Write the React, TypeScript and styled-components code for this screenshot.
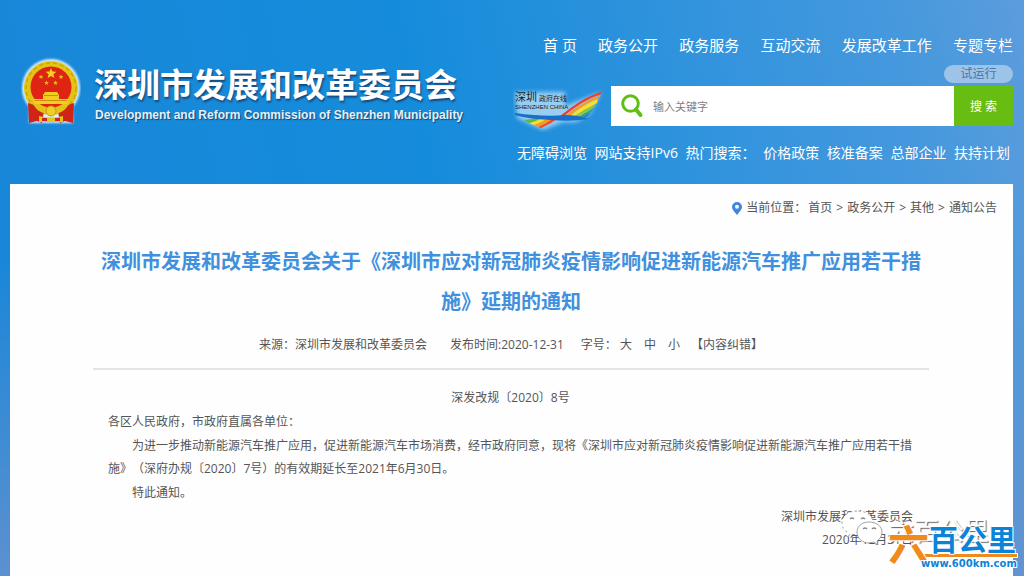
import React from "react";
import styled, { createGlobalStyle } from "styled-components";

const GlobalStyle = createGlobalStyle`
  * { box-sizing: border-box; }
  body {
    margin: 0;
    font-family: "Open Sans", "Noto Sans CJK SC", sans-serif;
    font-size: 12px;
    color: #555;
    text-spacing-trim: space-all;
  }
  a { color: inherit; text-decoration: none; }
  button { font: inherit; color: inherit; border: 0; background: none; padding: 0; cursor: pointer; }
  h1, h2, p { margin: 0; }
`;

const Page = styled.div`
  display: flex;
  flex-direction: column;
  min-height: 100vh;
  position: relative;
  overflow: hidden;
  background:
    linear-gradient(180deg, rgba(104, 146, 206, 0) 45%, rgba(104, 146, 206, 0.85) 100%),
    linear-gradient(78deg, #1a86d8 0%, #158cdb 45%, #3394dd 72%, #4899dd 90%, #5c9cdc 100%);
`;

const Header = styled.header`
  display: flex;
  padding: 35px 11px 21px 21px;
  color: #fff;
`;

const Brand = styled.a`
  flex: 0 0 492px;
  display: flex;
  align-items: flex-start;
  gap: 13px;
  padding-top: 21px;
`;

const BrandText = styled.span`
  display: flex;
  flex-direction: column;
  padding-top: 6px;
`;

const BrandName = styled.span`
  font-family: "Noto Sans CJK SC", sans-serif;
  font-size: 33px;
  font-weight: 700;
  line-height: 42px;
  text-shadow: 1px 2px 2px rgba(20, 50, 90, 0.75);
`;

const BrandEnglish = styled.span`
  padding-left: 1px;
  font-family: "Liberation Sans", sans-serif;
  font-size: 12px;
  font-weight: 700;
  line-height: 22px;
  color: #e4f0fa;
  text-shadow: 1px 1px 1px rgba(20, 50, 90, 0.8);
`;

const Tools = styled.div`
  flex: 1;
  display: flex;
  flex-direction: column;
`;

const MainNav = styled.nav`
  display: flex;
  justify-content: space-between;
  padding-left: 30px;
  font-size: 15px;
  line-height: 20px;
  white-space: nowrap;
`;

const TrialBadge = styled.span`
  align-self: flex-end;
  width: 69px;
  margin: 10px 0 3px;
  border-radius: 9px;
  background: #9dc3e8;
  color: #4577a8;
  line-height: 18px;
  text-align: center;
`;

const SearchRow = styled.form`
  display: flex;
  height: 40px;
  margin-bottom: 17px;
`;

const PortalLink = styled.a`
  flex: 0 0 98px;
`;

const SearchField = styled.label`
  flex: 1;
  display: flex;
  align-items: center;
  gap: 9px;
  padding-left: 10px;
  background: #fff;
`;

const SearchInput = styled.input`
  flex: 1;
  min-width: 0;
  border: 0;
  outline: 0;
  padding: 0;
  background: transparent;
  font: inherit;
  font-size: 11px;
  color: #555;
  &::placeholder { color: #808080; opacity: 1; }
`;

const SearchButton = styled.button`
  flex: 0 0 59px;
  background: #68bd12;
  color: #fff;
`;

const QuickLinks = styled.nav`
  display: flex;
  justify-content: space-between;
  padding: 0 3px 0 4px;
  font-size: 14px;
  line-height: 20px;
  white-space: nowrap;
`;

const Panel = styled.main`
  flex: 1;
  margin: 0 11px 0 10px;
  background: #fefefe;
`;

const Breadcrumb = styled.nav`
  display: flex;
  justify-content: flex-end;
  align-items: center;
  gap: 4px;
  padding: 14px 16px 0 0;
  line-height: 20px;
`;

const BreadcrumbLabel = styled.span`
  margin-right: -2px;
`;

const Article = styled.article`
  padding: 23px 84px 0 83px;
`;

const Title = styled.h1`
  font-family: "Noto Sans CJK SC", sans-serif;
  font-size: 20px;
  font-weight: 700;
  line-height: 40px;
  text-align: center;
  color: #4190dd;
`;

const Meta = styled.div`
  display: flex;
  justify-content: center;
  padding: 14px 0 13px;
  border-bottom: 2px solid #e4e4e4;
  line-height: 20px;
`;

const Published = styled.span`
  margin: 0 17px 0 23px;
`;

const SizePicker = styled.span`
  display: flex;
  gap: 12px;
  margin: 0 11px 0 3px;
`;

const Content = styled.div`
  display: flex;
  flex-direction: column;
  gap: 1px;
  padding: 16px 16px 24px 15px;
  line-height: 23px;
`;

const DocumentNumber = styled.p`
  text-align: center;
`;

const Paragraph = styled.p<{ $indent?: boolean }>`
  text-indent: ${(p) => (p.$indent ? "2em" : "0")};
`;

const Signature = styled.p`
  text-align: right;
`;

const Watermark = styled.div`
  position: absolute;
  right: 35px;
  bottom: 28px;
  display: flex;
  gap: 6px;
  align-items: center;
  color: #fff;
  font-family: "Noto Sans CJK SC", sans-serif;
  font-size: 25px;
  line-height: 36px;
  text-shadow: 1px 1px 1px rgba(70, 70, 70, 0.85);
`;

const SiteMark = styled.div`
  position: absolute;
  right: 4px;
  bottom: 0;
`;

function Emblem() {
  return (
    <svg width="60" height="70" viewBox="0 0 60 70" aria-hidden="true">
      <defs>
        <filter id="glow" x="-20%" y="-20%" width="140%" height="140%">
          <feGaussianBlur stdDeviation="1.3" />
        </filter>
      </defs>
      <g fill="#d9f0ff" filter="url(#glow)">
        <circle cx="30" cy="32" r="29" />
        <path d="M8 46h44v21H8z" />
      </g>
      <circle cx="30" cy="32" r="27" fill="#e3c313" />
      <circle cx="30" cy="32" r="25" fill="none" stroke="#c9a512" strokeWidth="1.400" strokeDasharray="4 3" />
      <circle cx="30" cy="31" r="20.500" fill="#df2413" />
      <path d="M30 12l1.500 3.600 3.900.2-3 2.500 1 3.800-3.400-2.100-3.400 2.100 1-3.800-3-2.500 3.900-.2z" fill="#f4d21c" />
      <g fill="#e9b71b">
        <path d="M20 18.400l.7 1.600 1.700.1-1.300 1.100.4 1.700-1.500-.9-1.500.9.4-1.700-1.300-1.100 1.700-.1z" />
        <path d="M40 18.400l.7 1.600 1.700.1-1.300 1.100.4 1.700-1.500-.9-1.500.9.4-1.700-1.300-1.100 1.700-.1z" />
        <path d="M25.500 24.400l.7 1.600 1.700.1-1.300 1.100.4 1.700-1.500-.9-1.500.9.4-1.700-1.300-1.100 1.700-.1z" />
        <path d="M34.500 24.400l.7 1.600 1.700.1-1.300 1.100.4 1.700-1.500-.9-1.500.9.4-1.700-1.300-1.100 1.700-.1z" />
      </g>
      <path d="M22 39l2-3h12l2 3v4h9v5H13v-5h9z" fill="#f0cf1e" />
      <path d="M23 39.500h14M14 44.500h32" stroke="#d08a14" />
      <path d="M7 47c8 2 10 6 16 8l-2 12-5-2-8 2z" fill="#cf2417" />
      <path d="M53 47c-8 2-10 6-16 8l2 12 5-2 8 2z" fill="#cf2417" />
      <path d="M12 47q9 9 18 4 9 5 18-4-4 11-18 11T12 47z" fill="#e3c313" />
      <circle cx="30" cy="55" r="5" fill="#ecd028" stroke="#c39a12" />
      <path d="M18 60q12 3 24 0v6H18z" fill="#e6c61a" />
      <path d="M21 62h5v3h-5zM34 62h5v3h-5z" fill="#cf2417" />
    </svg>
  );
}

function PortalLogo() {
  return (
    <svg width="98" height="46" viewBox="0 0 98 46" role="img" aria-label="深圳政府在线">
      <defs>
        <filter id="halo" x="-20%" y="-20%" width="140%" height="140%">
          <feGaussianBlur stdDeviation="2" />
        </filter>
      </defs>
      <g fill="#d9efff" filter="url(#halo)" opacity=".65">
        <path d="M2 6h50v14l36-14-11 22-14 8H50L30 44 4 32z" />
      </g>
      <path d="M88 6Q70 11 46 31l4 0Q68 15 88 8z" fill="#ef3f2c" />
      <path d="M88 9Q70 15 51 31h4Q70 19 86 12z" fill="#f79a22" />
      <path d="M85 13Q70 19 56 31h4Q72 23 84 17z" fill="#f6e02c" />
      <path d="M83 18Q72 23 60 31h4Q73 26 81 21z" fill="#8cc63a" />
      <path d="M81 22Q73 26 64 32h3Q74 29 79 25z" fill="#2fa566" />
      <path d="M78 26Q73 29 66 33h4Q74 31 76 29z" fill="#2382d2" />
      <path d="M47 31Q38 38 28 42l-3-1q9-4 17-10z" fill="#ee4a2b" />
      <path d="M42 31Q34 37 25 41l-4-2q8-3 15-8z" fill="#f79a22" />
      <path d="M37 31q-8 5-16 8l-5-2q8-2 15-6z" fill="#f3e033" />
      <path d="M31 31q-7 4-15 6l-5-3q7 0 13-3z" fill="#63b744" />
      <path d="M2 27q30 4 50 2 14 0 24 4-18 3-38 1Q14 33 2 29z" fill="#176fc8" />
      <text x="2" y="15" fill="#222" fontFamily="Noto Sans CJK SC, sans-serif" fontSize="11">深圳</text>
      <text x="26" y="15" fill="#222" fontFamily="Noto Sans CJK SC, sans-serif" fontSize="7">政府在线</text>
      <text x="2" y="23" fill="#222" fontFamily="Liberation Sans, sans-serif" fontSize="6">SHENZHEN CHINA</text>
    </svg>
  );
}

function SearchIcon() {
  return (
    <svg width="23" height="24" viewBox="0 0 23 24" fill="none" stroke="#62bd14" aria-hidden="true">
      <circle cx="9.500" cy="9.500" r="7.800" strokeWidth="3" />
      <path d="M15 15.500l4.500 5.500" strokeWidth="4" strokeLinecap="round" />
    </svg>
  );
}

function PinIcon() {
  return (
    <svg width="10" height="13" viewBox="0 0 10 13" aria-hidden="true">
      <path d="M5 0a5 5 0 0 0-5 5c0 3 3 5 5 8 2-3 5-5 5-8a5 5 0 0 0-5-5z" fill="#3f86e0" />
      <circle cx="5" cy="4.700" r="2" fill="#fff" />
    </svg>
  );
}

function ChatIcon() {
  return (
    <svg width="42" height="38" viewBox="0 0 42 38" fill="#fff" stroke="#8a8a8a" strokeWidth=".8" aria-hidden="true">
      <path d="M16 1C7 1 1 6 1 13c0 4 2 7 5 9l-1 5 5-3c13 3 22-3 22-11S25 1 16 1z" strokeDasharray="2 3" />
      <path d="M28 12c-7 0-12 4-12 10s5 11 12 11l5-1 4 3-1-4c3-2 5-5 5-9 0-6-6-10-13-10z" />
      <path d="M22 19q2-2 4 0M31 19q2-2 4 0M9 9q2-2 4 0M20 9q2-2 4 0" fill="none" strokeWidth="1.400" />
    </svg>
  );
}

function KmLogo() {
  return (
    <svg width="132" height="52" viewBox="0 0 132 52" role="img" aria-label="六百公里 www.600km.com">
      <g
        fontFamily="Noto Sans CJK SC, sans-serif"
        fontWeight="700"
        stroke="#fff"
        strokeWidth="2"
        paintOrder="stroke"
        strokeLinejoin="round"
      >
        <path d="M34 34H129v3H35z" fill="#f08a1c" />
        <text x="0" y="40" fontSize="41" fill="#f08a1c">六</text>
        <text x="41" y="31" fontSize="29" fill="#0b84d8">百公里</text>
        <text x="33" y="47" fontFamily="DejaVu Sans, sans-serif" fontSize="10" fill="#0b84d8">www.600km.com</text>
      </g>
    </svg>
  );
}

const navItems = ["首 页", "政务公开", "政务服务", "互动交流", "发展改革工作", "专题专栏"];
const hotSearches = ["价格政策", "核准备案", "总部企业", "扶持计划"];
const trail = ["首页", "政务公开", "其他", "通知公告"];

export default function App() {
  return (
    <Page lang="zh-CN">
      <GlobalStyle />
      <Header>
        <Brand href="#">
          <Emblem />
          <BrandText>
            <BrandName>深圳市发展和改革委员会</BrandName>
            <BrandEnglish>Development and Reform Commission of Shenzhen Municipality</BrandEnglish>
          </BrandText>
        </Brand>
        <Tools>
          <MainNav>
            {navItems.map((item) => (
              <a href="#" key={item}>{item}</a>
            ))}
          </MainNav>
          <TrialBadge>试运行</TrialBadge>
          <SearchRow onSubmit={(e) => e.preventDefault()}>
            <PortalLink href="#">
              <PortalLogo />
            </PortalLink>
            <SearchField>
              <SearchIcon />
              <SearchInput type="text" placeholder="输入关键字" aria-label="输入关键字" />
            </SearchField>
            <SearchButton type="submit">搜 索</SearchButton>
          </SearchRow>
          <QuickLinks>
            <a href="#">无障碍浏览</a>
            <a href="#">网站支持IPv6</a>
            <span>热门搜索：</span>
            {hotSearches.map((item) => (
              <a href="#" key={item}>{item}</a>
            ))}
          </QuickLinks>
        </Tools>
      </Header>

      <Panel>
        <Breadcrumb aria-label="当前位置">
          <PinIcon />
          <BreadcrumbLabel>当前位置：</BreadcrumbLabel>
          {trail.map((item, i) => (
            <React.Fragment key={item}>
              {i > 0 && <span>&gt;</span>}
              <a href="#">{item}</a>
            </React.Fragment>
          ))}
        </Breadcrumb>

        <Article>
          <Title>深圳市发展和改革委员会关于《深圳市应对新冠肺炎疫情影响促进新能源汽车推广应用若干措施》延期的通知</Title>
          <Meta>
            <span>来源：深圳市发展和改革委员会</span>
            <Published>发布时间:2020-12-31</Published>
            <span>字号：</span>
            <SizePicker>
              <button type="button">大</button>
              <button type="button">中</button>
              <button type="button">小</button>
            </SizePicker>
            <a href="#">【内容纠错】</a>
          </Meta>
          <Content>
            <DocumentNumber>深发改规〔2020〕8号</DocumentNumber>
            <Paragraph>各区人民政府，市政府直属各单位：</Paragraph>
            <Paragraph $indent>
              为进一步推动新能源汽车推广应用，促进新能源汽车市场消费，经市政府同意，现将《深圳市应对新冠肺炎疫情影响促进新能源汽车推广应用若干措施》（深府办规〔2020〕7号）的有效期延长至2021年6月30日。
            </Paragraph>
            <Paragraph $indent>特此通知。</Paragraph>
            <Signature>
              深圳市发展和改革委员会
              <br />
              2020年12月31日
            </Signature>
          </Content>
        </Article>
      </Panel>

      <Watermark>
        <ChatIcon />
        <span>六百公里</span>
      </Watermark>
      <SiteMark>
        <KmLogo />
      </SiteMark>
    </Page>
  );
}
